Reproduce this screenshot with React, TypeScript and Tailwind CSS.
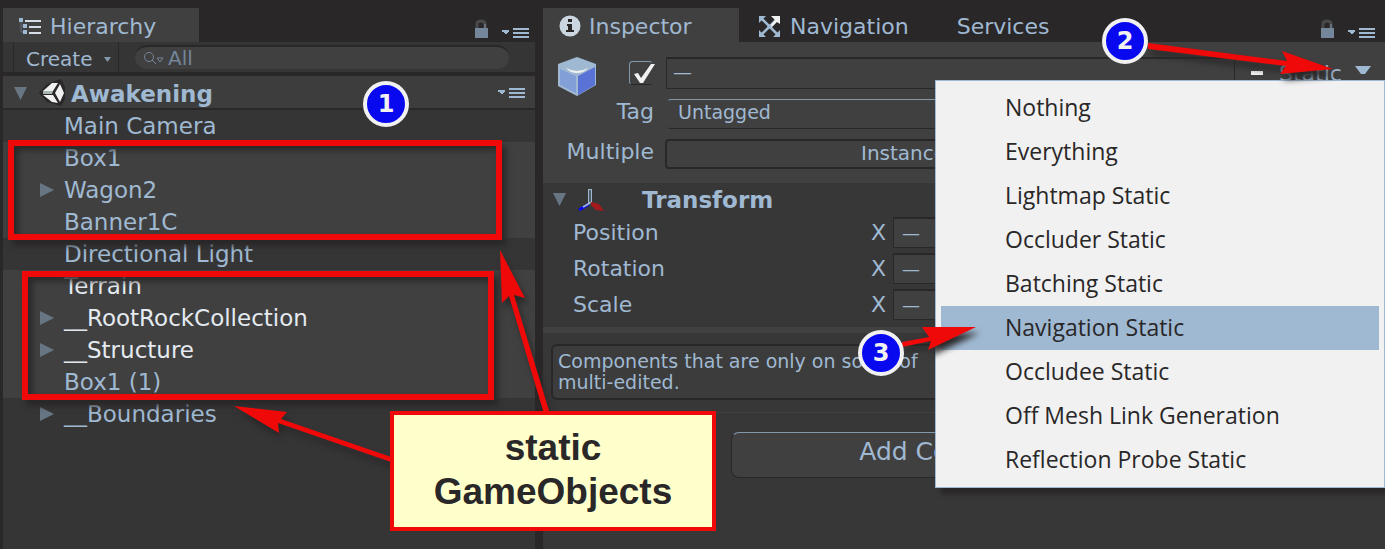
import React from "react";

type Item = { name: string; arrow?: boolean; selected?: boolean; bright?: boolean };

const items: Item[] = [
  { name: "Main Camera" },
  { name: "Box1", selected: true },
  { name: "Wagon2", selected: true, arrow: true },
  { name: "Banner1C", selected: true },
  { name: "Directional Light" },
  { name: "Terrain", selected: true, bright: true },
  { name: "__RootRockCollection", selected: true, arrow: true, bright: true },
  { name: "__Structure", selected: true, arrow: true, bright: true },
  { name: "Box1 (1)", selected: true },
  { name: "__Boundaries", arrow: true },
];

const flags = [
  "Nothing",
  "Everything",
  "Lightmap Static",
  "Occluder Static",
  "Batching Static",
  "Navigation Static",
  "Occludee Static",
  "Off Mesh Link Generation",
  "Reflection Probe Static",
];

function PanelMenu() {
  return (
    <svg width="28" height="12" viewBox="0 0 28 12" fill="#a0b9d2" aria-hidden="true">
      <path d="M1 3h7v2H7v1H6v1H4V6H3V5H1zM12 1h16v2H12zM12 5h16v2H12zM12 9h16v2H12z" />
    </svg>
  );
}

function PanelTools() {
  return (
    <div className="ml-auto flex items-end gap-3 pb-[3px] pr-1.5">
      <button aria-label="Lock">
        <svg width="15" height="20" viewBox="0 0 15 20" aria-hidden="true">
          <path d="M3 9V5q0-3 4-3t4 3v4" fill="none" stroke="#484a4c" strokeWidth="3" />
          <path d="M11 5v4" stroke="#8498ac" strokeWidth="1" />
          <path d="M1 9h13v10H1z" fill="#74869a" />
        </svg>
      </button>
      <button aria-label="Panel options">
        <PanelMenu />
      </button>
    </div>
  );
}

function Foldout({ open }: { open?: boolean }) {
  return open ? (
    <svg width="13" height="13" viewBox="0 0 13 13" aria-hidden="true">
      <path d="M0 0h13L6.500 13z" fill="#687684" />
    </svg>
  ) : (
    <svg width="14" height="14" viewBox="0 0 14 14" aria-hidden="true">
      <path d="M0 0L14 7L0 14z" fill="#687684" />
    </svg>
  );
}

function Hierarchy() {
  return (
    <section className="flex min-w-0 flex-col bg-[#363536]">
      <header className="flex h-[34px] bg-[#292728]">
        <h2 className="flex w-[196px] items-center gap-2 bg-[#404040] pl-4 pt-0.5 text-[22px]">
          <svg width="23" height="17" viewBox="0 0 23 17" aria-hidden="true">
            <path d="M0 0h4v4H0zM4 6h4v4H4zM4 12h4v4H4z" fill="#a0b9d2" />
            <path d="M2 4v10h2M2 8h2" stroke="#5f6c78" fill="none" />
            <path d="M6 2h16v2H6zM10 8h12v2H10zM10 14h12v2H10z" fill="#d5dee6" />
          </svg>
          Hierarchy
        </h2>
        <PanelTools />
      </header>
      <div className="flex h-[34px] items-center border-b-4 border-[#292728] bg-[#363536] pl-2.5 pr-[26px]">
        <button className="flex h-full w-[106px] items-center gap-3 border-x border-[#292728] pl-3 pt-1 text-[20px]">
          Create
          <svg width="7" height="5" viewBox="0 0 7 5" aria-hidden="true">
            <path d="M0 0h7L3.500 5z" fill="#8498ac" />
          </svg>
        </button>
        <label className="ml-4 flex h-6 min-w-0 flex-1 items-center rounded-full border-t-2 border-[#292728] bg-[#404040] pl-2">
          <svg width="21" height="15" viewBox="0 0 21 15" fill="none" stroke="#74869a" aria-hidden="true">
            <circle cx="6" cy="6" r="4.500" />
            <path d="M9 9l4 4M14 7h6l-3 4z" />
          </svg>
          <input
            aria-label="Search hierarchy"
            placeholder="All"
            className="min-w-0 flex-1 bg-transparent pl-1 text-[20px] leading-5 outline-none placeholder:text-[#74869a]"
          />
        </label>
      </div>
      <div className="flex h-[34px] items-center border-b-2 border-[#292728] bg-[#3d3d3d] pl-[11px] pr-[10px] pt-0.5">
        <Foldout open />
        <svg className="ml-3" width="28" height="28" viewBox="0 0 28 28" aria-hidden="true">
          <path d="M0 14L8 5L22 0L26 8V20L22 27L8 23z" fill="#292728" />
          <path d="M4 12L13 4L19 4L14 12zM4 16L13 23L19 24L14 16zM21 5L25 14L21 23L16 14z" fill="#f1f1f1" />
          <path d="M4 12h10l-1 3H4z" fill="#a9b3b3" />
        </svg>
        <h3 className="ml-1 flex-1 pt-0.5 text-[23px] font-bold leading-8">Awakening</h3>
        <button aria-label="Scene options">
          <PanelMenu />
        </button>
      </div>
      <ul>
        {items.map((it) => (
          <li
            key={it.name}
            className={`flex h-8 items-center pl-[37px] text-[23px] leading-8 ${it.selected ? "bg-[#404040]" : ""} ${it.bright ? "text-[#e4eaf0]" : ""}`}
          >
            <span className="flex w-6 shrink-0">{it.arrow && <Foldout />}</span>
            {it.name}
          </li>
        ))}
      </ul>
    </section>
  );
}

function Inspector() {
  return (
    <section className="flex min-w-0 flex-col bg-[#383738]">
      <header className="flex h-[34px] bg-[#292728] pr-1 text-[22px]">
        <h2 className="flex w-[196px] items-center gap-2 bg-[#404040] pl-4 pt-0.5">
          <svg width="22" height="22" viewBox="0 0 22 22" aria-hidden="true">
            <circle cx="11" cy="11" r="10.500" fill="#cbd6e0" />
            <path d="M9 4h4v3H9zM8 9h5v6h2v2H7v-2h2v-4H8z" fill="#292728" />
          </svg>
          Inspector
        </h2>
        <button className="flex items-center gap-2.5 pl-5 pt-0.5">
          <svg width="21" height="21" viewBox="0 0 21 21" aria-hidden="true">
            <path d="M3 3L18 18M18 3L3 18" stroke="#a0b9d2" strokeWidth="2.500" />
            <path d="M0 0h7L5 2 2 5 0 7zM0 14l7 7H0zM21 14v7h-7z" fill="#a0b9d2" />
            <path d="M12 0h9v8l-3-2-6 6-2-1 6-7z" fill="#f1f1f1" />
            <circle cx="10.500" cy="10.500" r="2" fill="#a0b9d2" />
          </svg>
          Navigation
        </button>
        <button className="ml-12 pt-0.5">Services</button>
        <PanelTools />
      </header>

      <div className="flex flex-col gap-2.5 bg-[#404040] pb-3.5 pl-3.5 pr-2 pt-[15px]">
        <div className="flex h-8 items-center">
          <svg className="mt-2 shrink-0" width="40" height="40" viewBox="0 0 40 40" aria-hidden="true">
            <path d="M1 7L20 0L39 7V28L20 39L1 29z" fill="#a0b9d2" />
            <path d="M3 12L19 19V36L3 28z" fill="#829fd8" />
            <path d="M21 19L38 10V28L21 38z" fill="#5972d6" />
            <path d="M9 11q11 6 22 0q-4 5-11 5T9 11z" fill="#f1f1f1" />
          </svg>
          <label className="relative ml-8 flex h-7 w-7 shrink-0 items-center">
            <input
              type="checkbox"
              defaultChecked
              aria-label="Active"
              className="peer h-6 w-6 appearance-none rounded border border-b-[#292728] border-l-[#8498ac] border-r-[#404040] border-t-[#8498ac]"
            />
            <svg
              className="pointer-events-none absolute left-1 top-1 hidden peer-checked:block"
              width="22"
              height="22"
              viewBox="0 0 22 22"
              aria-hidden="true"
            >
              <path d="M1 11l4-1 3 5L18 1h4L10 20H7z" fill="#f1f1f1" />
            </svg>
          </label>
          <input
            aria-label="Name"
            defaultValue="—"
            className="ml-[9px] h-8 min-w-0 flex-1 border border-t-2 border-[#292728] bg-transparent pb-1 pl-1.5 text-[19px] outline-none"
          />
          <label className="ml-4 flex w-[104px] items-center gap-4 text-[22px]">
            <input
              type="checkbox"
              className="h-1 w-3 shrink-0 appearance-none bg-[#f1f1f1]"
            />
            Static
          </label>
          <svg className="mb-1.5 mr-1.5" width="16" height="8" viewBox="0 0 16 8" aria-hidden="true">
            <path d="M0 0h16l-6 8H6z" fill="#a0b9d2" />
          </svg>
        </div>
        <div className="flex h-[30px] items-center">
          <label htmlFor="tag" className="w-[98px] shrink-0 pb-1 pr-[1px] text-right text-[22px] leading-6">
            Tag
          </label>
          <select
            id="tag"
            className="ml-3 h-[30px] min-w-0 flex-1 appearance-none rounded border border-b-[#292728] border-l-[#404040] border-r-[#404040] border-t-[#8498ac] bg-[#404040] pb-1 pl-2.5 text-[19px] leading-6"
          >
            <option>Untagged</option>
          </select>
        </div>
        <div className="flex h-[30px] items-center">
          <span className="w-[98px] shrink-0 pb-1 pr-[1px] text-right text-[22px] leading-6">Multiple</span>
          <button className="ml-[10px] h-[30px] min-w-0 flex-1 rounded border-2 border-[#292728] pb-1 pl-[194px] text-left text-[20px] leading-6">
            Instance
          </button>
        </div>
      </div>

      <div className="border-b-[6px] border-[#404040] px-2.5 pb-[5px]">
        <div className="flex h-[31px] items-center pt-0.5">
          <Foldout open />
          <svg className="ml-3" width="26" height="24" viewBox="0 0 26 24" aria-hidden="true">
            <path d="M12 15V1" stroke="#a0b9d2" strokeWidth="4" />
            <path d="M12 14V2" stroke="#4f5a65" strokeWidth="2" />
            <path d="M11 16L1 22" stroke="#0909f0" strokeWidth="3" />
            <path d="M12 15l-7 4" stroke="#a0b9d2" strokeWidth="2" />
            <path d="M13 14l8 2 5 7-8-1-5-5z" fill="#a51a1c" />
          </svg>
          <h3 className="ml-[38px] pt-0.5 text-[23px] font-bold">Transform</h3>
        </div>
        {["Position", "Rotation", "Scale"].map((n) => (
          <div key={n} className="flex h-9 items-center pl-5 text-[22px]">
            <span className="w-[298px] shrink-0">{n}</span>
            <label className="flex min-w-0 flex-1 items-center gap-[7px]">
              X
              <input
                defaultValue="—"
                aria-label={`${n} X`}
                className="h-[31px] min-w-0 flex-1 border border-t-2 border-[#292728] bg-[#404040] pl-2 text-[18px] outline-none"
              />
            </label>
          </div>
        ))}
      </div>

      <div className="border-b border-[#404040] px-2 pb-3 pt-[11px]">
        <p className="rounded-md border-2 border-[#292728] bg-[#3c3c3c] px-[5px] py-[5px] text-[19px] leading-[21px]">
          Components that are only on some of
          <br />
          multi-edited.
        </p>
      </div>
      <button className="mx-auto mt-[19px] h-[46px] w-[466px] max-w-full rounded-lg border border-b-[#292728] border-l-[#292728] border-r-[#404040] border-t-[#8498ac] bg-[#404040] pb-1.5 pr-2 text-[25px] leading-8">
        Add Component
      </button>
    </section>
  );
}

function Badge({ n, place }: { n: number; place: string }) {
  return (
    <span
      className={`absolute flex h-[46px] w-[46px] items-center justify-center rounded-full border-4 border-[#f1f1f1] bg-[#0909f0] text-[24px] font-bold leading-6 text-[#f1f1f1] ${place}`}
    >
      {n}
    </span>
  );
}

export default function App() {
  return (
    <main className="relative grid min-h-screen grid-cols-[532fr_842fr] gap-2 overflow-hidden bg-[#292728] pl-[3px] pt-2 font-['DejaVu_Sans',Verdana,sans-serif] text-[#a0b9d2]">
      <Hierarchy />
      <Inspector />

      <div
        role="menu"
        className="absolute right-0 top-20 w-[450px] border border-[#a0b9d2] bg-[#f1f1f1] p-[5px] font-['Open_Sans',sans-serif] text-[#292728] shadow-[6px_6px_4px_#292728]"
      >
        {flags.map((f) => (
          <button
            key={f}
            role="menuitem"
            className={`flex h-11 w-full items-center pb-0.5 pl-16 text-[23px] ${f === "Navigation Static" ? "bg-[#a0b9d2]" : ""}`}
          >
            {f}
          </button>
        ))}
      </div>

      <div className="pointer-events-none absolute left-2 top-[140px] h-[100px] w-[494px] border-[6px] border-[#f00909] shadow-[4px_6px_6px_#292728,inset_4px_4px_6px_#292728]" />
      <div className="pointer-events-none absolute left-[22px] top-[271px] h-[129px] w-[472px] border-[6px] border-[#f00909] shadow-[4px_6px_6px_#292728,inset_4px_4px_6px_#292728]" />

      <svg
        className="pointer-events-none absolute left-0 top-0 drop-shadow-[3px_6px_3px_#292728]"
        width="1385"
        height="549"
        viewBox="0 0 1385 549"
        aria-hidden="true"
      >
        <g fill="#f00909">
          <path d="M500 250L525 298L514 295L550 414H544L509 296L502 303z" />
          <path d="M234 406L287 412L281 419L394 458V463L278 423L279 433z" />
          <path d="M1333 69L1282 51L1287 61L1148 43V49L1286 66L1280 74z" />
          <path d="M976 327H922L929 337L902 342V347L931 341L928 350z" />
        </g>
      </svg>

      <Badge n={1} place="left-[363px] top-[81px]" />
      <Badge n={2} place="left-[1102px] top-[18px]" />
      <Badge n={3} place="left-[858px] top-[330px]" />

      <div className="absolute left-[390px] top-[411px] flex h-[120px] w-[326px] flex-col border-4 border-[#f00909] bg-[#ffffcc] pt-[11px] text-center font-['Liberation_Sans',Arial,sans-serif] text-[37px] font-bold leading-[44px] text-[#292728]">
        <span>static</span>
        <span>GameObjects</span>
      </div>
    </main>
  );
}
